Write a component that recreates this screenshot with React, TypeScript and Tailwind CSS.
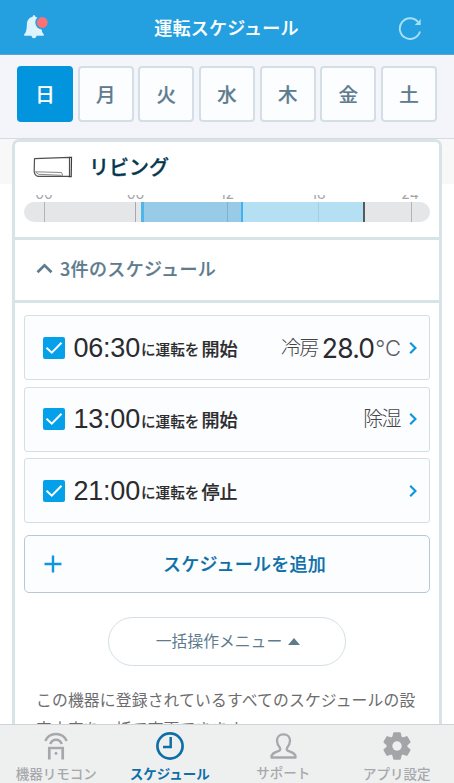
import { useState } from "react";
import clsx from "clsx";

interface Schedule {
  time: string;
  action: string;
  mode?: string;
  temp?: string;
}

const DAYS = ["日", "月", "火", "水", "木", "金", "土"];
const HOURS = ["00", "06", "12", "18", "24"];

const SCHEDULES: Schedule[] = [
  { time: "06:30", action: "開始", mode: "冷房", temp: "28.0" },
  { time: "13:00", action: "開始", mode: "除湿" },
  { time: "21:00", action: "停止" },
];

function BellIcon() {
  return (
    <svg width="26" height="27" viewBox="0 0 26 27" className="block">
      <path
        d="M10 1.200c.9 0 1.400.6 1.400 1.700 3.800.7 5.500 3.300 5.700 7.200.3 5.900.7 8.200 2.700 10.400.5.700.1 1.300-.6 1.300h-6.700c-.2 1.600-1 2.500-2.500 2.500s-2.300-.9-2.500-2.500H.800c-.7 0-1.100-.6-.6-1.300 2-2.200 2.500-4.500 2.700-10.400.2-3.900 1.900-6.500 5.700-7.200 0-1.100.5-1.700 1.400-1.700Z"
        fill="#def4fd"
      />
      <circle cx="18.300" cy="8.500" r="7" fill="#249fdf" />
      <circle cx="18.300" cy="8.500" r="5.400" fill="#fc7175" />
    </svg>
  );
}

function RefreshIcon() {
  return (
    <svg width="24" height="24" viewBox="0 0 24 24" className="block" fill="none">
      <path d="M22 15.500A10.300 10.300 0 1 1 20 6" stroke="#a9e0f8" strokeWidth="1.900" />
      <path d="M22.700 3v6h-5.900Z" fill="#a9e0f8" />
    </svg>
  );
}

function AirConIcon() {
  return (
    <svg width="40" height="22" viewBox="0 0 40 22" className="block" fill="none">
      <path d="M1.500 2.600 36.500 1.300v19H5Q1.500 19.500 1.200 15.500Z" stroke="#505050" strokeWidth="1.200" strokeLinejoin="round" />
      <path d="M2.500 15.800 28.500 16.500q1 1.500 1 3.300M28.500 19.300 5.500 18.300 2.500 15.800" stroke="#777" strokeWidth=".9" />
      <path d="M36.300 1.300h2.200l-.3 19.300h-2.700" stroke="#3c3c3c" strokeWidth="1.200" />
    </svg>
  );
}

function CheckBox() {
  return (
    <span className="flex size-[22px] items-center justify-center rounded-[2px] bg-[#04a0ea]">
      <svg width="18" height="14" viewBox="0 0 18 14" fill="none">
        <path d="M1.500 6.700 6.800 11.700 16.500 1.700" stroke="#fff" strokeWidth="2" />
      </svg>
    </span>
  );
}

function ChevronRight() {
  return (
    <svg width="8" height="12" viewBox="0 0 8 12" fill="none">
      <path d="M1.200.8 6.400 6 1.200 11.200" stroke="#0d97df" strokeWidth="2.200" />
    </svg>
  );
}

function RemoteIcon() {
  return (
    <svg width="24" height="28" viewBox="0 0 24 28" fill="none" stroke="#a6a8ac">
      <path d="M1.300 9C3.500 4 7.500 2.100 12 2.100S20.500 4 22.700 9" strokeWidth="2.500" />
      <path d="M6.200 12C7.500 9 9.500 7.800 12 7.800s4.500 1.200 5.800 4.200" strokeWidth="2.500" />
      <path d="M5.300 27.500V16h13.400v11.500" strokeWidth="2.700" />
      <circle cx="12" cy="21.300" r="1.500" fill="#a6a8ac" stroke="none" />
    </svg>
  );
}

function ClockIcon() {
  return (
    <svg width="28" height="28" viewBox="0 0 28 28" fill="none" stroke="#0e6fa8">
      <circle cx="14" cy="14" r="12.600" strokeWidth="2.700" />
      <path d="M14.700 5v10H7" strokeWidth="2.500" />
    </svg>
  );
}

function PersonIcon() {
  return (
    <svg width="27" height="26" viewBox="0 0 27 26" fill="none">
      <path
        d="M13.500 1.300c-4.300 0-6.500 2.800-6.500 6.500 0 3.200 1.500 5.300 2.900 7 .8 1.400.3 2.600-1 3.100-3.400 1.400-7.500 1.800-7.500 6.600h24.200c0-4.800-4.100-5.200-7.500-6.600-1.300-.5-1.800-1.700-1-3.100 1.400-1.700 2.900-3.800 2.900-7 0-3.700-2.200-6.500-6.500-6.500Z"
        stroke="#a6a8ac"
        strokeWidth="2.300"
        strokeLinejoin="round"
      />
    </svg>
  );
}

function GearIcon() {
  return (
    <svg width="28" height="28" viewBox="0 0 28 28" fill="none">
      <g fill="#a3a5a9">
        <circle cx="14" cy="14" r="10.400" />
        {[0, 60, 120].map((deg) => (
          <path
            key={deg}
            d="M10.200.9q.2-.7.900-.7h5.800q.7 0 .9.700l.9 4.100v18l-.9 4.100q-.2.700-.9.700h-5.800q-.7 0-.9-.7L9.300 23V5Z"
            transform={`rotate(${deg} 14 14)`}
          />
        ))}
      </g>
      <circle cx="14" cy="14" r="4.700" fill="#eef0f0" />
    </svg>
  );
}

function Timeline() {
  return (
    <div className="mx-[9px]">
      <div className="flex h-[7px] items-end justify-between overflow-hidden px-[10px]">
        {HOURS.map((hour) => (
          <span key={hour} className="w-5 text-center font-[Inter] text-[14px] leading-[16px] text-[#a3a5a9]">
            {hour}
          </span>
        ))}
      </div>
      <div className="flex h-[20px] overflow-hidden rounded-full bg-[#e5e6e8]">
        <span className="ml-[20px] w-px bg-[#b2b3b6]" />
        <span className="ml-[90px] w-px bg-[#a8a9ac]" />
        <span className="ml-[5px] w-[3px] bg-[#4fb6eb]" />
        <span className="w-[83px] bg-[#97cbe8]" />
        <span className="w-px bg-[#7fb1cc]" />
        <span className="w-[13px] bg-[#97cbe8]" />
        <span className="w-[2px] bg-[#41b2ee]" />
        <span className="w-[75px] bg-[#b5dff3]" />
        <span className="w-px bg-[#a3cde1]" />
        <span className="w-[44px] bg-[#b5dff3]" />
        <span className="w-[2px] bg-[#58595c]" />
        <span className="ml-[46px] w-px bg-[#b2b3b6]" />
      </div>
    </div>
  );
}

function ScheduleRow({ schedule }: { schedule: Schedule }) {
  return (
    <div className="flex h-[65px] items-center rounded-[3px] border border-[#d3dfe5] bg-[#fcfdff] pr-[12px] pl-[18px] text-[#2b2b2d]">
      <CheckBox />
      <span className="ml-[7px] w-[68px] text-right font-['Liberation_Sans'] text-[27px] leading-[40px] tracking-[-0.2px]">
        {schedule.time}
      </span>
      <span className="ml-px pt-[3px] text-[14.6px] leading-[22px] font-medium [-webkit-text-stroke:0.15px]">に運転を</span>
      <span className="ml-[2px] text-[18px] leading-[26px] font-medium [-webkit-text-stroke:0.2px]">
        {schedule.action}
      </span>
      <span className="ml-auto flex items-center">
        {schedule.mode && (
          <span className="pb-[2px] text-[20px] leading-[28px] font-light tracking-[-1.6px] text-[#444446]">
            {schedule.mode}
          </span>
        )}
        {schedule.temp && (
          <>
            <span className="ml-[4px] font-[Inter] text-[26.5px] leading-[40px] tracking-[-0.8px]">{schedule.temp}</span>
            <span className="ml-px font-[Inter] text-[22px] leading-[40px] font-light text-[#5c5c5f]">°C</span>
          </>
        )}
      </span>
      <span className={schedule.temp ? "ml-[8px]" : "ml-[9px]"}>
        <ChevronRight />
      </span>
    </div>
  );
}

const TABS = [
  { label: "機器リモコン", icon: <RemoteIcon /> },
  { label: "スケジュール", icon: <ClockIcon /> },
  { label: "サポート", icon: <PersonIcon /> },
  { label: "アプリ設定", icon: <GearIcon /> },
];

export default function App() {
  const [day, setDay] = useState("日");

  return (
    <div className="flex h-[783px] w-[454px] flex-col overflow-hidden bg-white font-['Noto_Sans_CJK_JP',sans-serif]">
      {/* Header */}
      <header className="flex h-[55px] shrink-0 items-center justify-between border-b border-[#5ba5cb] bg-[#249fdf] pt-px pr-[32px] pl-[24px]">
        <BellIcon />
        <h1 className="ml-[5px] text-[18px] font-medium tracking-[0.2px] text-white [-webkit-text-stroke:0.2px]">
          運転スケジュール
        </h1>
        <RefreshIcon />
      </header>

      {/* Day picker */}
      <div className="grid h-[84px] shrink-0 grid-cols-7 gap-[4.67px] border-b border-[#d5dbe1] bg-[#f4f5fa] px-[17px] pt-[11px]">
        {DAYS.map((d) => (
          <button
            key={d}
            onClick={() => setDay(d)}
            className={clsx(
              "h-[56px] rounded-[4px] border-2 text-[19.5px] font-medium [-webkit-text-stroke:0.2px]",
              d === day
                ? "border-[#0294dc] bg-[#0294dc] text-white"
                : "border-[#d3dfe5] bg-[#fcfdff] text-[#5e7c8e]"
            )}
          >
            {d}
          </button>
        ))}
      </div>

      {/* Device card */}
      <main className="min-h-0 flex-1 overflow-hidden bg-linear-to-b from-[#f8f8f8] from-[45px] to-white to-[45px] px-[12px]">
        <div className="h-[640px] rounded-t-[7px] border-[3px] border-[#d8e3e8] bg-white">
          <div className="flex h-[53px] items-center pb-[3px] pl-[18px]">
            <AirConIcon />
            <h2 className="ml-[16px] text-[20px] font-medium text-[#06374f] [-webkit-text-stroke:0.3px]">リビング</h2>
          </div>
          <Timeline />

          <div className="mt-[15px] flex h-[66px] items-center border-y-[3px] border-[#d8e3e8] pb-[3px] pl-[21px] text-[#5e7c8e]">
            <svg width="17" height="11" viewBox="0 0 17 11" fill="none">
              <path d="M1.500 9.300 8.500 2.300l7 7" stroke="currentColor" strokeWidth="2.700" />
            </svg>
            <span className="ml-[7px] text-[18px] font-medium tracking-[0.35px] [-webkit-text-stroke:0.2px]">
              3件のスケジュール
            </span>
          </div>

          <div className="mx-[9px] mt-[12px] flex flex-col gap-[6.5px]">
            {SCHEDULES.map((schedule) => (
              <ScheduleRow key={schedule.time} schedule={schedule} />
            ))}
          </div>

          <button className="mx-[9px] mt-[12px] flex h-[58px] w-[406px] items-center rounded-[5px] border border-[#b5c8d5] bg-[#fcfdff] pb-px pl-[19px]">
            <svg width="18" height="18" viewBox="0 0 18 18" fill="none">
              <path d="M9 .500v17M.500 9h17" stroke="#0d97df" strokeWidth="2.400" />
            </svg>
            <span className="ml-[101px] text-[18px] font-medium tracking-[0.25px] text-[#0e6fa8] [-webkit-text-stroke:0.2px]">
              スケジュールを追加
            </span>
          </button>

          <button className="mx-auto mt-[24px] flex h-[49px] w-[238px] items-center justify-center rounded-full border border-[#d3dfe5] pb-px pl-[2px] text-[15.8px] text-[#5e7c8e]">
            一括操作メニュー
            <svg width="12" height="7" viewBox="0 0 12 7" className="ml-[6px]">
              <path d="M0 7 6 0l6 7Z" fill="currentColor" />
            </svg>
          </button>

          <p className="mx-[21px] mt-[19px] w-[386px] text-[15.8px] leading-[29px] tracking-[0.15px] text-[#6c6c6e]">
            この機器に登録されているすべてのスケジュールの設定内容を一括で変更できます。
          </p>
        </div>
      </main>

      {/* Tab bar */}
      <nav className="grid h-[59px] shrink-0 grid-cols-4 border-t border-[#d0d3d5] bg-[#eef0f0]">
        {TABS.map((tab, i) => (
          <div
            key={tab.label}
            className={clsx(
              "flex flex-col items-center pt-[7px] pr-px text-[13.5px] leading-[20px] whitespace-nowrap",
              i === 1 ? "font-bold text-[#0e6fa8]" : "font-medium text-[#a6a8ac]"
            )}
          >
            <span className="flex h-[28px] items-center">{tab.icon}</span>
            <span className={i === 2 ? "mt-[2px]" : "mt-[3px]"}>{tab.label}</span>
          </div>
        ))}
      </nav>
    </div>
  );
}
